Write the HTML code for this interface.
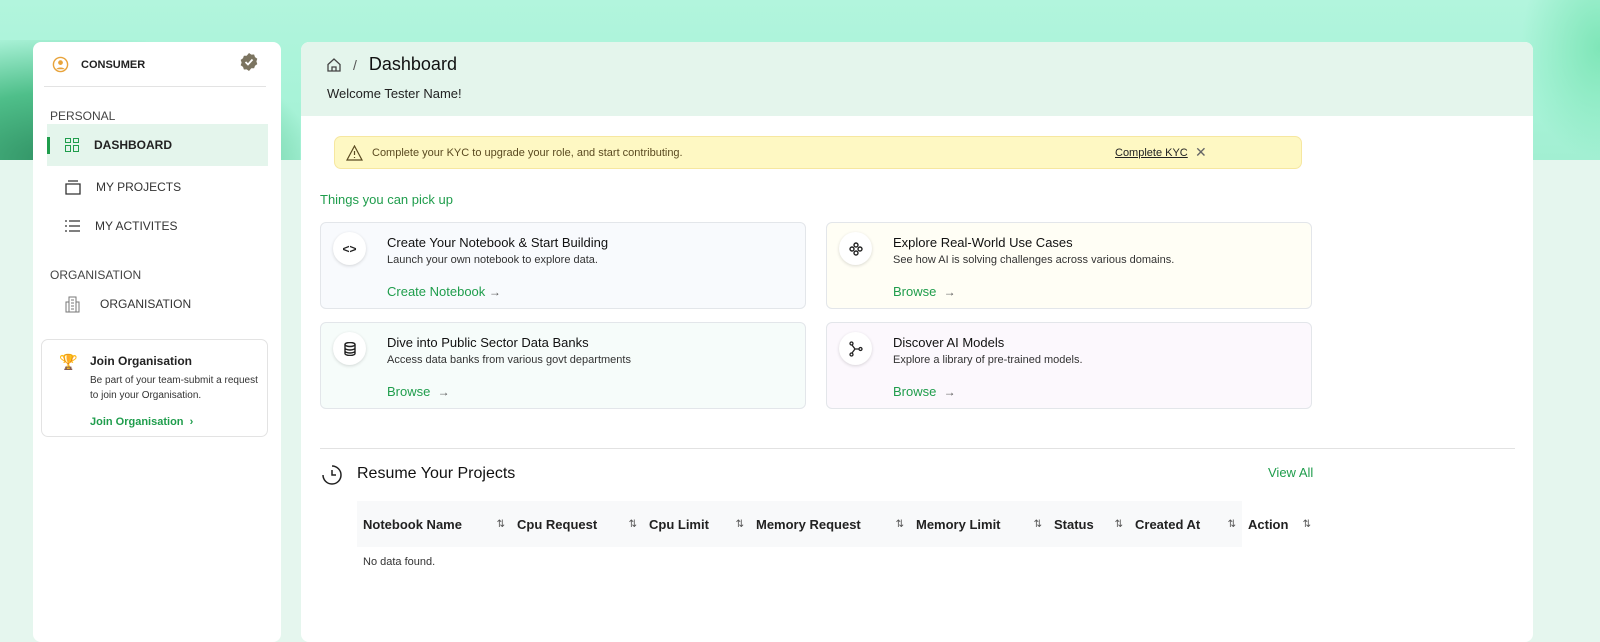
<!DOCTYPE html>
<html><head><meta charset="utf-8"><style>
*{box-sizing:border-box;margin:0;padding:0}
body{width:1600px;height:624px;overflow:hidden;font-family:"Liberation Sans",sans-serif;background:#e5f6ee;position:relative;color:#222}
.top{position:absolute;left:0;top:0;width:1600px;height:160px;background:linear-gradient(180deg,#b2f5dd 0%,#a8f3d8 60%,#a2efd2 100%)}
.wave{position:absolute;left:0;top:40px;width:300px;height:120px;background:radial-gradient(ellipse at 20% 100%,#2f8f62 0%,#4fbf8a 40%,rgba(160,240,210,0) 75%)}
.wave2{position:absolute;right:0;top:0;width:80px;height:160px;background:radial-gradient(ellipse at 100% 30%,#7fe6b8 0%,rgba(160,240,210,0) 70%)}
.side{position:absolute;left:33px;top:42px;width:248px;height:600px;background:#fff;border-radius:8px}
.main{position:absolute;left:301px;top:42px;width:1232px;height:600px;background:#fff;border-radius:8px;overflow:hidden}
.hdr{height:74px;background:#e4f5ec;padding:12px 26px}
.green{color:#1f9d4c}
.nav{position:absolute;left:14px;width:221px;height:42px;display:flex;align-items:center;font-size:12px;color:#333}
.card{position:absolute;width:486px;height:87px;border:1px solid #e3e6ea;border-radius:6px}
.ic{position:absolute;left:12px;top:9px;width:33px;height:33px;border-radius:50%;background:#fff;box-shadow:0 1px 3px rgba(0,0,0,.15);display:flex;align-items:center;justify-content:center}
.ct{position:absolute;left:66px;top:12px;font-size:13px;color:#111}
.cs{position:absolute;left:66px;top:31px;font-size:11px;color:#333}
.cl{position:absolute;left:66px;top:61px;font-size:13px;color:#1f9d4c}
.cl span{color:#555;font-size:12px}
th{font-size:13px;font-weight:bold;text-align:left;color:#222;height:46px;padding:0 6px;white-space:nowrap}
th div{display:flex;justify-content:space-between;align-items:center}
.s{font-size:10px;color:#555;font-weight:normal}
</style></head><body>
<div class="top"><div class="wave"></div><div class="wave2"></div></div>
<div class="side">
 <div style="position:absolute;left:19px;top:14px;display:flex;align-items:center;font-size:11px;font-weight:bold;color:#222">
  <svg width="17" height="17" viewBox="0 0 18 18"><circle cx="9" cy="9" r="7.5" fill="none" stroke="#e8a33a" stroke-width="1.5"/><circle cx="9" cy="7" r="2.5" fill="#e8a33a"/><path d="M4.5 14c1-2.5 8-2.5 9 0" fill="#e8a33a"/></svg>
  <span style="margin-left:12px">CONSUMER</span></div>
 <svg style="position:absolute;left:206px;top:10px" width="20" height="20" viewBox="0 0 20 20"><path d="M10 1l2.3 1.6 2.8-.1.9 2.6 2.3 1.6-.9 2.7.9 2.7-2.3 1.6-.9 2.6-2.8-.1L10 19l-2.3-1.6-2.8.1-.9-2.6-2.3-1.6.9-2.7-.9-2.7 2.3-1.6.9-2.6 2.8.1z" fill="#7b7460"/><path d="M6.5 10l2.5 2.5 4.5-5" stroke="#fff" stroke-width="1.8" fill="none"/></svg>
 <div style="position:absolute;left:11px;top:44px;width:222px;height:1px;background:#e3e3e3"></div>
 <div style="position:absolute;left:17px;top:67px;font-size:12px;color:#444">PERSONAL</div>
 <div class="nav" style="top:82px;background:#e4f5ec;font-weight:bold;color:#222"><div style="width:3px;height:17px;background:#1f9d4c"></div>
  <svg style="margin-left:15px" width="14" height="14" viewBox="0 0 14 14" fill="none" stroke="#1f9d4c"><rect x=".5" y=".5" width="5" height="4"/><rect x="8.5" y=".5" width="5" height="4"/><rect x=".5" y="7.5" width="5" height="6"/><rect x="8.5" y="7.5" width="5" height="6"/></svg><span style="margin-left:15px">DASHBOARD</span></div>
 <div class="nav" style="top:124px"><svg style="margin-left:18px" width="16" height="15" viewBox="0 0 16 15" fill="none" stroke="#333" stroke-width="1.3"><path d="M3 1h10M1 4h14v10H1z"/></svg><span style="margin-left:15px">MY PROJECTS</span></div>
 <div class="nav" style="top:163px"><svg style="margin-left:18px" width="15" height="12" viewBox="0 0 15 12" stroke="#333" stroke-width="1.3"><path d="M0 1h2M4 1h11M0 6h2M4 6h11M0 11h2M4 11h11"/></svg><span style="margin-left:15px">MY ACTIVITES</span></div>
 <div style="position:absolute;left:17px;top:226px;font-size:12px;color:#444">ORGANISATION</div>
 <div class="nav" style="top:241px"><svg style="margin-left:18px" width="15" height="17" viewBox="0 0 15 17" fill="none" stroke="#777"><path d="M4 1h7v15H4zM1 6h3v10H1zM11 6h3v10h-3zM6 4h3M6 7h3M6 10h3M6 13h3"/></svg><span style="margin-left:20px">ORGANISATION</span></div>
 <div style="position:absolute;left:8px;top:297px;width:227px;height:98px;border:1px solid #e3e3e3;border-radius:7px">
  <div style="position:absolute;left:17px;top:13px;font-size:15px;color:#e8a020">🏆</div>
  <div style="position:absolute;left:48px;top:14px;font-size:12px;font-weight:bold;color:#222">Join Organisation</div>
  <div style="position:absolute;left:48px;top:33px;font-size:10px;line-height:15px;color:#333">Be part of your team-submit a request<br>to join your Organisation.</div>
  <div style="position:absolute;left:48px;top:76px;font-size:11px;font-weight:bold" class="green">Join Organisation &nbsp;›</div>
 </div>
</div>
<div class="main">
 <div class="hdr">
  <div style="display:flex;align-items:center;font-size:18px;color:#111"><svg width="14" height="14" viewBox="0 0 14 14" fill="none" stroke="#444" stroke-width="1.3"><path d="M1 6.5L7 1l6 5.5V13H1z"/><path d="M5 13V9h4v4"/></svg><span style="margin-left:12px;font-size:14px;color:#555">/</span><span style="margin-left:12px">Dashboard</span></div>
  <div style="font-size:13px;margin-top:11px;color:#222">Welcome Tester Name!</div>
 </div>
 <div style="position:absolute;left:33px;top:94px;width:968px;height:33px;background:#fef8c3;border:1px solid #f6e7a0;border-radius:7px;font-size:11px;color:#5a4a20">
  <svg style="position:absolute;left:11px;top:8px" width="17" height="16" viewBox="0 0 17 16" fill="none" stroke="#5a4a20" stroke-width="1.2"><path d="M8.5 1L16 15H1z"/><path d="M8.5 6v4M8.5 12v1"/></svg>
  <span style="position:absolute;left:37px;top:10px">Complete your KYC to upgrade your role, and start contributing.</span>
  <span style="position:absolute;left:780px;top:10px;text-decoration:underline;color:#222">Complete KYC</span>
  <span style="position:absolute;left:860px;top:7px;font-size:14px;color:#666">✕</span>
 </div>
 <div style="position:absolute;left:19px;top:150px;font-size:13px" class="green">Things you can pick up</div>
 <div class="card" style="left:19px;top:180px;background:#f8fafd"><div class="ic"><span style="font-size:12px;font-weight:bold">&lt;&gt;</span></div><div class="ct">Create Your Notebook &amp; Start Building</div><div class="cs">Launch your own notebook to explore data.</div><div class="cl">Create Notebook <span>→</span></div></div>
 <div class="card" style="left:525px;top:180px;background:#fffef5"><div class="ic"><svg width="14" height="14" viewBox="0 0 14 14" fill="none" stroke="#222" stroke-width="1.4"><circle cx="7" cy="3" r="2"/><circle cx="7" cy="11" r="2"/><circle cx="3" cy="7" r="2"/><circle cx="11" cy="7" r="2"/></svg></div><div class="ct">Explore Real-World Use Cases</div><div class="cs">See how AI is solving challenges across various domains.</div><div class="cl">Browse &nbsp;<span>→</span></div></div>
 <div class="card" style="left:19px;top:280px;background:#f6fcfa"><div class="ic"><svg width="12" height="14" viewBox="0 0 12 14" fill="none" stroke="#222" stroke-width="1.4"><ellipse cx="6" cy="2.5" rx="5" ry="2"/><path d="M1 2.5v9c0 1.1 2.2 2 5 2s5-.9 5-2v-9M1 6c0 1.1 2.2 2 5 2s5-.9 5-2M1 9c0 1.1 2.2 2 5 2s5-.9 5-2"/></svg></div><div class="ct">Dive into Public Sector Data Banks</div><div class="cs">Access data banks from various govt departments</div><div class="cl">Browse &nbsp;<span>→</span></div></div>
 <div class="card" style="left:525px;top:280px;background:#fcf8fd"><div class="ic"><svg width="14" height="16" viewBox="0 0 14 16" fill="none" stroke="#222" stroke-width="1.3"><circle cx="2.5" cy="2.5" r="1.5"/><circle cx="11.5" cy="8" r="1.5"/><circle cx="2.5" cy="13.5" r="1.5"/><path d="M3 4l3 4h4M6 8l-3 4"/></svg></div><div class="ct">Discover AI Models</div><div class="cs">Explore a library of pre-trained models.</div><div class="cl">Browse &nbsp;<span>→</span></div></div>
 <div style="position:absolute;left:19px;top:406px;width:1195px;height:1px;background:#e2e2e2"></div>
 <svg style="position:absolute;left:20px;top:422px" width="22" height="22" viewBox="0 0 22 22" fill="none" stroke="#222" stroke-width="1.5"><path d="M11 2a9 9 0 1 1-9 9"/><path d="M11 6v5h4"/></svg>
 <div style="position:absolute;left:56px;top:423px;font-size:16px;color:#111">Resume Your Projects</div>
 <div style="position:absolute;left:967px;top:423px;font-size:13px" class="green">View All</div>
 <table style="position:absolute;left:56px;top:459px;border-collapse:collapse">
  <tr style="background:#f8f9fa"><th style="width:154px"><div>Notebook Name<span class="s">⇅</span></div></th><th style="width:132px"><div>Cpu Request<span class="s">⇅</span></div></th><th style="width:107px"><div>Cpu Limit<span class="s">⇅</span></div></th><th style="width:160px"><div>Memory Request<span class="s">⇅</span></div></th><th style="width:138px"><div>Memory Limit<span class="s">⇅</span></div></th><th style="width:81px"><div>Status<span class="s">⇅</span></div></th><th style="width:113px"><div>Created At<span class="s">⇅</span></div></th><th style="background:#fff;width:75px"><div>Action<span class="s">⇅</span></div></th></tr>
 </table>
 <div style="position:absolute;left:62px;top:514px;font-size:11px;color:#333">No data found.</div>
</div>
</body></html>
